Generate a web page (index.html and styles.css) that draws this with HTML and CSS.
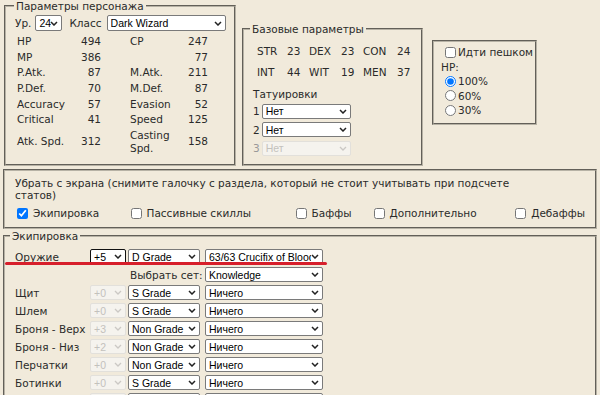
FILE: index.html
```html
<!DOCTYPE html>
<html lang="ru">
<head>
    <meta charset="UTF-8">
    <title>Калькулятор персонажа</title>
    <link rel="stylesheet" href="styles.css">
</head>
<body>

<div class="top">
    <fieldset class="char">
        <legend>Параметры персонажа</legend>
        <div class="lvl-row">
            <span>Ур.</span>
            <select class="lvl"><option>24</option></select>
            <span>Класс</span>
            <select class="cls"><option>Dark Wizard</option></select>
        </div>
        <div class="stats">
            <span>HP</span><span class="n">494</span><span class="l2">CP</span><span class="n">247</span>
            <span>MP</span><span class="n">386</span><span class="l2"></span><span class="n">77</span>
            <span>P.Atk.</span><span class="n">87</span><span class="l2">M.Atk.</span><span class="n">211</span>
            <span>P.Def.</span><span class="n">70</span><span class="l2">M.Def.</span><span class="n">87</span>
            <span>Accuracy</span><span class="n">57</span><span class="l2">Evasion</span><span class="n">52</span>
            <span>Critical</span><span class="n">41</span><span class="l2">Speed</span><span class="n">125</span>
            <span>Atk. Spd.</span><span class="n">312</span><span class="l2">Casting Spd.</span><span class="n">158</span>
        </div>
    </fieldset>

    <fieldset class="base">
        <legend>Базовые параметры</legend>
        <div class="base-grid">
            <span>STR</span><span>23</span><span>DEX</span><span>23</span><span>CON</span><span>24</span>
            <span>INT</span><span>44</span><span>WIT</span><span>19</span><span>MEN</span><span>37</span>
        </div>
        <div class="tattoo-title">Татуировки</div>
        <div class="tattoo"><span>1</span><select><option>Нет</option></select></div>
        <div class="tattoo"><span>2</span><select><option>Нет</option></select></div>
        <div class="tattoo off"><span>3</span><select disabled><option>Нет</option></select></div>
    </fieldset>

    <fieldset class="walk">
        <label class="opt"><input type="checkbox">Идти пешком</label>
        <div>HP:</div>
        <label class="opt"><input type="radio" name="hp" checked>100%</label>
        <label class="opt"><input type="radio" name="hp">60%</label>
        <label class="opt"><input type="radio" name="hp">30%</label>
    </fieldset>
</div>

<fieldset class="filter">
    <p class="note">Убрать с экрана (снимите галочку с раздела, который не стоит учитывать при подсчете статов)</p>
    <table class="parts">
        <tr>
            <td><label class="opt"><input type="checkbox" checked>Экипировка</label></td>
            <td><label class="opt"><input type="checkbox">Пассивные скиллы</label></td>
            <td><label class="opt"><input type="checkbox">Баффы</label></td>
            <td><label class="opt"><input type="checkbox">Дополнительно</label></td>
            <td class="last"><label class="opt"><input type="checkbox">Дебаффы</label></td>
        </tr>
    </table>
</fieldset>

<fieldset class="equip">
    <legend>Экипировка</legend>
    <div class="eq-grid">
        <span class="mark"></span>

        <span>Оружие</span>
        <select class="ench active"><option>+5</option></select>
        <select class="grade"><option>D Grade</option></select>
        <select class="item"><option>63/63 Crucifix of Blood</option></select>

        <span></span><span></span>
        <span class="set-label">Выбрать сет:</span>
        <select class="item"><option>Knowledge</option></select>

        <span>Щит</span>
        <select class="ench" disabled><option>+0</option></select>
        <select class="grade"><option>S Grade</option></select>
        <select class="item"><option>Ничего</option></select>

        <span>Шлем</span>
        <select class="ench" disabled><option>+0</option></select>
        <select class="grade"><option>S Grade</option></select>
        <select class="item"><option>Ничего</option></select>

        <span>Броня - Верх</span>
        <select class="ench" disabled><option>+3</option></select>
        <select class="grade"><option>Non Grade</option></select>
        <select class="item"><option>Ничего</option></select>

        <span>Броня - Низ</span>
        <select class="ench" disabled><option>+2</option></select>
        <select class="grade"><option>Non Grade</option></select>
        <select class="item"><option>Ничего</option></select>

        <span>Перчатки</span>
        <select class="ench" disabled><option>+0</option></select>
        <select class="grade"><option>Non Grade</option></select>
        <select class="item"><option>Ничего</option></select>

        <span>Ботинки</span>
        <select class="ench" disabled><option>+0</option></select>
        <select class="grade"><option>S Grade</option></select>
        <select class="item"><option>Ничего</option></select>

        <span></span>
        <select class="ench" disabled><option>+0</option></select>
        <select class="grade"><option>S Grade</option></select>
        <select class="item"><option>Ничего</option></select>
    </div>
</fieldset>

</body>
</html>
```

FILE: styles.css
```css
body {
    margin: 0;
    padding: 0 3px;
    background: #f1eadb;
    font-family: "DejaVu Sans", Verdana, sans-serif;
    font-size: 10.5px;
    color: #2a2a2a;
    overflow: hidden;
}
fieldset {
    margin: 0;
    min-width: 0;
    box-sizing: border-box;
    border: 2px groove #b7b2a5;
}
legend {
    padding: 0 2px;
    line-height: 12px;
}
select {
    appearance: none;
    -webkit-appearance: none;
    box-sizing: border-box;
    font-family: "Liberation Sans", Arial, sans-serif;
    font-size: 10.5px;
    height: 15px;
    margin: 0;
    padding: 0 11px 0 3px;
    border: 1px solid #7a7a7a;
    border-radius: 2px;
    color: #000;
    background: #fff url("data:image/svg+xml,%3Csvg xmlns='http://www.w3.org/2000/svg' viewBox='0 0 8 5'%3E%3Cpath d='M1 1l3 3 3-3' fill='none' stroke='%23222' stroke-width='1.5'/%3E%3C/svg%3E") no-repeat right 3px center / 8px 5px;
}
select:disabled {
    color: #b0b0b0;
    border-color: #dcdcdc;
    background-color: #f7f7f7;
    background-image: url("data:image/svg+xml,%3Csvg xmlns='http://www.w3.org/2000/svg' viewBox='0 0 8 5'%3E%3Cpath d='M1 1l3 3 3-3' fill='none' stroke='%23bbb' stroke-width='1.3'/%3E%3C/svg%3E");
}
.opt {
    display: flex;
    align-items: center;
    white-space: nowrap;
}
.opt input {
    width: 11px;
    height: 11px;
    margin: 0 2px 0 4px;
}

/* top row */
.top {
    display: flex;
    align-items: stretch;
}
.char {
    width: 232px;
    margin-left: 1px;
    padding: 3px 8px 10px;
}
.lvl-row {
    display: flex;
    align-items: center;
    height: 16px;
    margin-left: 1px;
}
.lvl-row select {
    height: 16px;
}
.lvl {
    width: 27px;
    margin: 0 7px 0 4px;
    padding-right: 10px;
}
.cls {
    width: 120px;
    margin-left: 5px;
}
.stats {
    display: grid;
    grid-template-columns: 64px 20px 87px 20px;
    align-items: center;
    row-gap: 3.2px;
    line-height: 12.5px;
    margin: 4px 0 0 3px;
}
.stats .n {
    text-align: right;
}
.stats .l2 {
    padding-left: 29px;
}

.base {
    width: 181px;
    margin: 23px 0 0 6px;
    padding: 4px 6px 8px;
}
.base-grid {
    display: grid;
    grid-template-columns: 30px 22px 32px 22px 34px auto;
    row-gap: 9px;
    line-height: 12px;
    margin: 6px 0 0 7px;
}
.tattoo-title {
    line-height: 12px;
    margin: 10px 0 0 3px;
}
.tattoo {
    display: flex;
    align-items: center;
    gap: 2px;
    margin: 3.5px 0 0 3px;
}
.tattoo select {
    width: 89px;
}
.tattoo.off span {
    color: #999;
}

.walk {
    width: 105px;
    height: 85px;
    align-self: flex-start;
    margin: 40px 0 0 9px;
    padding: 3px 7px;
    line-height: 14.5px;
}

/* filter */
.filter {
    margin-top: 3px;
    padding: 7px 10px 7px;
}
.note {
    margin: 0;
    max-width: 530px;
    line-height: 11.5px;
}
.parts {
    width: 100%;
    border-collapse: collapse;
    margin-top: 5px;
}
.parts td {
    padding: 0;
    height: 14px;
}
.parts td.last {
    width: 1%;
}
.parts .opt input {
    margin: 0 5px 0 2px;
}

/* equipment */
.equip {
    margin-top: 1px;
    padding: 7px 5px 0;
}
.eq-grid {
    position: relative;
    display: grid;
    grid-template-columns: 73px 36px 72px auto;
    column-gap: 2px;
    row-gap: 3px;
    align-items: center;
    line-height: 12px;
    margin-left: 5px;
}
.ench {
    width: 36px;
}
.ench.active {
    border-color: #111;
}
.grade {
    width: 72px;
}
.item {
    width: 118px;
    margin-left: 3px;
}
.set-label {
    white-space: nowrap;
    margin-left: 2px;
}
.mark {
    position: absolute;
    left: -10px;
    top: 13px;
    width: 322px;
    height: 3px;
    border-radius: 2px;
    background: #d71f2b;
}
```
